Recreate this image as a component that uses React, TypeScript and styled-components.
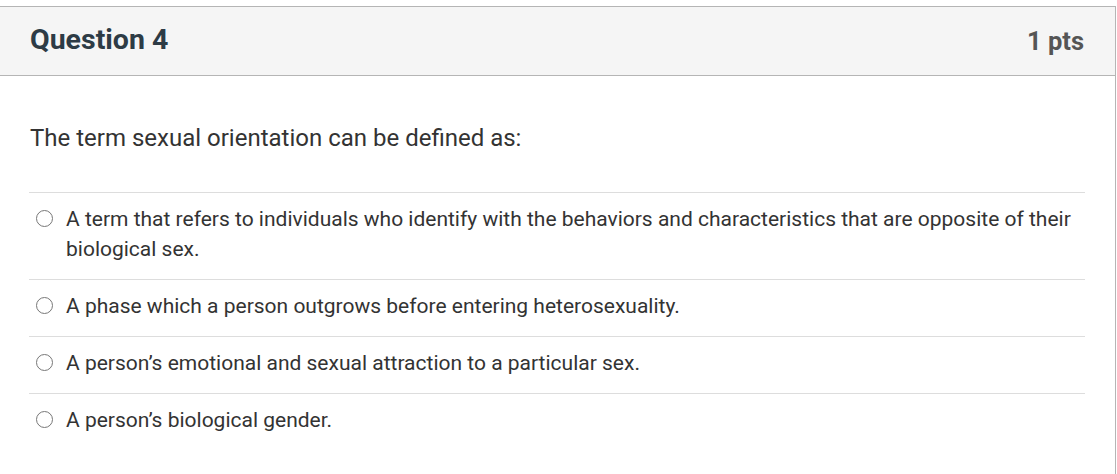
import React from "react";
import styled, { createGlobalStyle } from "styled-components";

const Global = createGlobalStyle`
  html, body { margin: 0; padding: 0; background: #fff; }
  body { font-family: Roboto, "Liberation Sans", Arial, sans-serif; }
`;

const Card = styled.div`
  margin-top: 6px;
  width: 1116px;
  border-top: 1px solid #b5b5b5;
  border-right: 1px solid #b5b5b5;
  box-sizing: border-box;
  background: #fff;
  min-height: 480px;
`;

const Header = styled.div`
  display: flex;
  align-items: center;
  justify-content: space-between;
  height: 69px;
  box-sizing: border-box;
  padding: 0 31px 3px 30px;
  background: #f5f5f5;
  border-bottom: 1px solid #b5b5b5;
`;

const Title = styled.h2`
  margin: 0;
  font-size: 28.5px;
  font-weight: 700;
  color: #2d3b45;
`;

const Points = styled.div`
  margin-top: 3px;
  font-size: 25.5px;
  font-weight: 700;
  color: #555;
`;

const Body = styled.div`
  padding: 47px 30px 0 29px;
`;

const Prompt = styled.p`
  margin: 0 0 39px 1px;
  font-size: 24px;
  line-height: 30px;
  color: #333;
`;

const Answers = styled.div`
  display: flex;
  flex-direction: column;
  width: 1056px;
`;

const Answer = styled.label`
  display: flex;
  align-items: flex-start;
  gap: 13px;
  padding: 11px 0 15px 7px;
  border-top: 1px solid #ddd;
  font-size: 21px;
  line-height: 30px;
  color: #333;
`;

const Radio = styled.span`
  flex: none;
  width: 17px;
  height: 17px;
  margin-top: 6px;
  border: 1.5px solid #777;
  border-radius: 50%;
  box-sizing: border-box;
`;

const answers = [
  "A term that refers to individuals who identify with the behaviors and characteristics that are opposite of their biological sex.",
  "A phase which a person outgrows before entering heterosexuality.",
  "A person\u2019s emotional and sexual attraction to a particular sex.",
  "A person\u2019s biological gender.",
];

export default function App() {
  return (
    <>
      <Global />
      <Card>
        <Header>
          <Title>Question 4</Title>
          <Points>1 pts</Points>
        </Header>
        <Body>
          <Prompt>The term sexual orientation can be defined as:</Prompt>
          <Answers>
            {answers.map((a) => (
              <Answer key={a}>
                <Radio />
                <span>{a}</span>
              </Answer>
            ))}
          </Answers>
        </Body>
      </Card>
    </>
  );
}
